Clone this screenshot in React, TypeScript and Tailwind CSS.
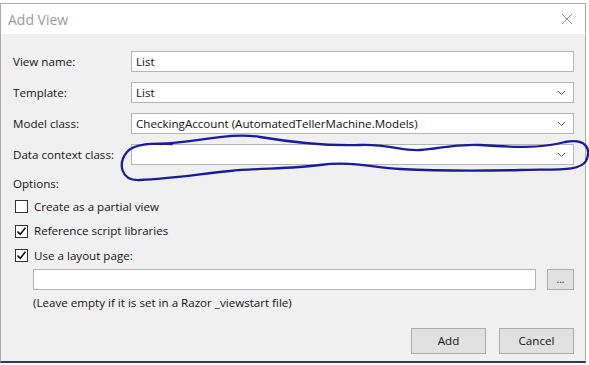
import React from "react";

const font = { fontFamily: '"Open Sans", "Noto Sans", sans-serif' };

function Chevron() {
  return (
    <svg width="9" height="6" viewBox="0 0 9 6" className="shrink-0">
      <path d="M1 1 L4.5 4.5 L8 1" fill="none" stroke="#606060" strokeWidth="1" />
    </svg>
  );
}

function Field({ label, value, combo }: { label: string; value: string; combo?: boolean }) {
  return (
    <div className="flex h-[21px] items-center">
      <div className="w-[118px] text-[11.6px] text-[#151515]">{label}</div>
      <div className="flex h-[21px] flex-1 items-center border border-[#b4b4b4] bg-white pl-[4px] pr-[7px]">
        <span className="flex-1 text-[11.6px] text-[#111]">{value}</span>
        {combo && <Chevron />}
      </div>
    </div>
  );
}

function Check({ checked, label }: { checked: boolean; label: string }) {
  return (
    <div className="flex h-[24.5px] items-center gap-[6px] pl-[2px]">
      <div className="flex h-[13px] w-[13px] items-center justify-center border border-[#333] bg-white">
        {checked && (
          <svg width="11" height="11" viewBox="0 0 11 11">
            <path d="M1.5 5.5 L4.2 8.3 L9.5 1.8" fill="none" stroke="#111" strokeWidth="1.6" />
          </svg>
        )}
      </div>
      <span className="text-[11.6px] text-[#151515]">{label}</span>
    </div>
  );
}

export default function App() {
  return (
    <div className="relative h-[365px] w-[589px] bg-white" style={font}>
      <div className="ml-0 mt-[3px] flex h-[360px] w-[586px] flex-col border border-b-2 border-[#a9a9a9] border-b-[#2f3d56]">
        <div className="flex h-[30px] items-center justify-between bg-white pl-[7px] pr-[9px]">
          <span className="text-[14px] text-[#9a9a9a]">Add View</span>
          <svg width="12" height="12" viewBox="0 0 12 12" className="mr-[3px]">
            <path d="M1 1 L11 11 M11 1 L1 11" stroke="#8a8a8a" strokeWidth="1" />
          </svg>
        </div>
        <div className="flex flex-1 flex-col bg-[#f0f0f0] pl-[12px] pr-[11px] pt-[17px]">
          <div className="flex flex-col gap-[10px]">
            <Field label="View name:" value="List" />
            <Field label="Template:" value="List" combo />
            <Field label="Model class:" value="CheckingAccount (AutomatedTellerMachine.Models)" combo />
            <Field label="Data context class:" value="" combo />
          </div>
          <div className="mt-[10px] text-[11.6px] text-[#151515]">Options:</div>
          <div className="mt-[2px] flex flex-col">
            <Check checked={false} label="Create as a partial view" />
            <Check checked label="Reference script libraries" />
            <Check checked label="Use a layout page:" />
          </div>
          <div className="ml-[20px] mt-[1px] flex items-center gap-[11px]">
            <div className="h-[21px] flex-1 border border-[#b4b4b4] bg-white" />
            <div className="flex h-[21px] w-[27px] items-center justify-center border border-[#adadad] bg-[#e1e1e1] text-[10px] leading-none text-[#222]">
              ...
            </div>
          </div>
          <div className="ml-[20px] mt-[4px] text-[11.6px] text-[#151515]">
            (Leave empty if it is set in a Razor _viewstart file)
          </div>
          <div className="mt-auto mb-[7px] flex justify-end gap-[13px]">
            <button className="h-[26px] w-[75px] border border-[#adadad] bg-[#e1e1e1] text-[11.6px] text-[#111]">Add</button>
            <button className="h-[26px] w-[75px] border border-[#adadad] bg-[#e1e1e1] text-[11.6px] text-[#111]">Cancel</button>
          </div>
        </div>
      </div>
      <svg className="pointer-events-none absolute left-0 top-0" width="589" height="365" viewBox="0 0 589 365">
        <path
          d="M160 141 C200 139 230 129 260 134 S330 143 360 142 C390 141 400 148 420 147 C440 146 450 141 480 142 C510 144 540 146 565 139 C585 135 592 145 586 158 C580 168 560 166 520 167 C480 168 440 168 400 166 C370 164 350 158 320 162 C290 166 260 165 230 168 C200 171 170 176 140 177 C120 178 118 160 127 149 C134 141 150 140 172 141"
          fill="none"
          stroke="#1a1a9c"
          strokeWidth="2.3"
          strokeLinecap="round"
        />
      </svg>
    </div>
  );
}
